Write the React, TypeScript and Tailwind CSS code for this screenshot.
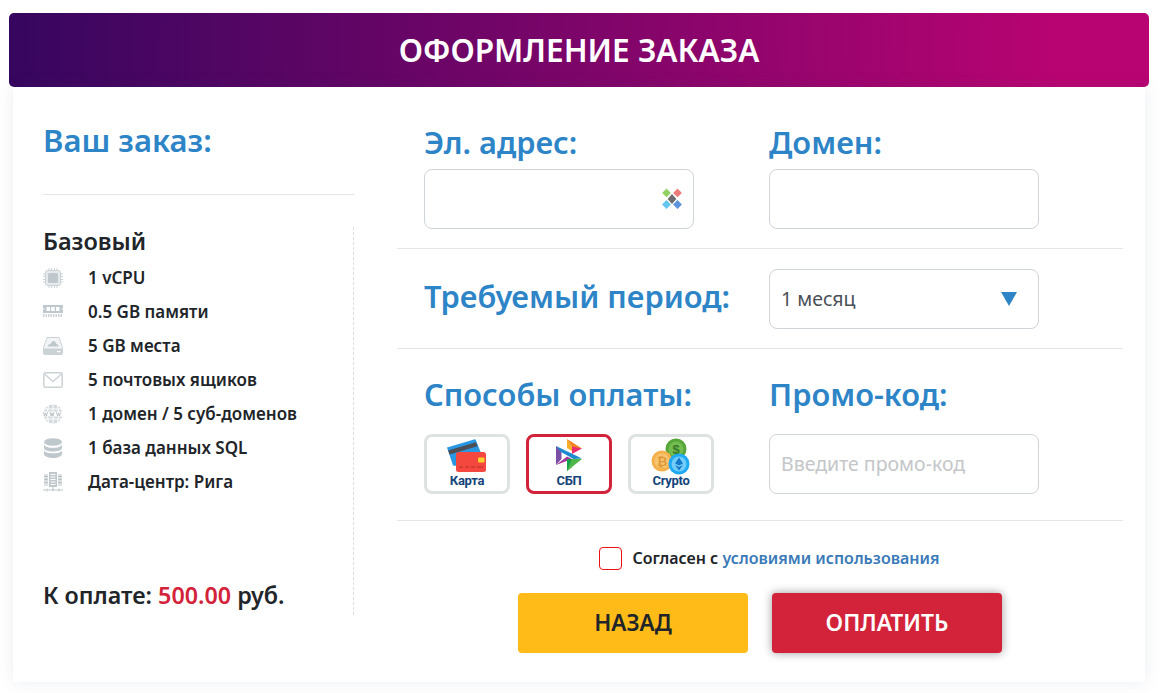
const specs = [
  { label: "1 vCPU", icon: <CpuIcon /> },
  { label: "0.5 GB памяти", icon: <RamIcon /> },
  { label: "5 GB места", icon: <DiskIcon /> },
  { label: "5 почтовых ящиков", icon: <MailIcon /> },
  { label: "1 домен / 5 суб-доменов", icon: <WebIcon /> },
  { label: "1 база данных SQL", icon: <DbIcon /> },
  { label: "Дата-центр: Рига", icon: <RackIcon /> },
];

function CpuIcon() {
  return (
    <svg width="20" height="20" viewBox="0 0 20 20" fill="none">
      <rect x="2.500" y="2.500" width="15" height="15" rx="2" fill="#e6eaec" stroke="#ccd3d7" />
      <rect x="5" y="5" width="10" height="10" rx="1.500" fill="#bfc8cd" />
      <path d="M6 0v2.500M8.500 0v2.500M11.500 0v2.500M14 0v2.500M6 17.500V20M8.500 17.500V20M11.500 17.500V20M14 17.500V20M0 6h2.500M0 8.500h2.500M0 11.500h2.500M0 14h2.500M17.500 6H20M17.500 8.500H20M17.500 11.500H20M17.500 14H20" stroke="#ccd3d7" />
    </svg>
  );
}

function RamIcon() {
  return (
    <svg width="20" height="20" viewBox="0 0 20 20" fill="none">
      <rect x="0" y="3" width="20" height="8" fill="#bfc8cd" />
      <path d="M3.500 5h3.500v4H3.500zM8.200 5h3.500v4H8.200zM13 5h3.500v4H13z" fill="#fff" />
      <path d="M0 13.500h20" stroke="#ccd3d7" strokeWidth="3" strokeDasharray="1.500 1" />
      <path d="M0 7h1.500M18.500 7H20" stroke="#fff" />
    </svg>
  );
}

function DiskIcon() {
  return (
    <svg width="20" height="20" viewBox="0 0 20 20" fill="none">
      <path d="M4 1.500h12l3.500 10v6a1 1 0 0 1-1 1h-17a1 1 0 0 1-1-1v-6z" fill="#f2f4f5" stroke="#ccd3d7" />
      <path d="M.5 12.500h19v5a1 1 0 0 1-1 1h-17a1 1 0 0 1-1-1z" fill="#ccd3d7" />
      <path d="M4.500 10.500c.500-2 2-2.500 3-2.500C8.500 6 9.500 5 10.500 5s2.500 1 3 3c1 0 2 1 2.500 2.500z" fill="#bfc8cd" />
      <rect x="14" y="15" width="3.500" height="1.200" fill="#fff" />
    </svg>
  );
}

function MailIcon() {
  return (
    <svg width="20" height="20" viewBox="0 0 20 20" fill="none">
      <rect x=".8" y="2.800" width="18.400" height="14.400" rx="1.500" stroke="#ccd3d7" strokeWidth="1.500" />
      <path d="M1.500 4 10 11.500 18.500 4" stroke="#ccd3d7" strokeWidth="1.500" />
    </svg>
  );
}

function WebIcon() {
  return (
    <svg width="20" height="20" viewBox="0 0 20 20" fill="none">
      <circle cx="10" cy="10" r="9.500" fill="#d3d9dc" />
      <path d="M1 5h18M1 15h18M10 .5v7M5.500 1.500 4.500 7.500M14.500 1.500l1 6M10 12.500v7M4.500 12.500l1 6M15.500 12.500l-1 6" stroke="#fff" strokeWidth="1" />
      <rect x="0" y="7.500" width="20" height="5" fill="#fff" />
      <path d="M.5 8l1 4 1-3 1 3 1-4M7 8l1 4 1-3 1 3 1-4M13.500 8l1 4 1-3 1 3 1-4" stroke="#aeb8bd" strokeWidth="0.800" />
    </svg>
  );
}

function DbIcon() {
  return (
    <svg width="20" height="20" viewBox="0 0 20 20" fill="#bfc8cd">
      <ellipse cx="10" cy="4" rx="9" ry="3.800" />
      <path d="M1 6.500c1 2.500 5 3.300 9 3.300s8-.8 9-3.300V10c0 2-4 3.500-9 3.500S1 12 1 10z" />
      <path d="M1 12.500c1 2 5 2.800 9 2.800s8-.8 9-2.800V16c0 2.200-4 4-9 4s-9-1.800-9-4z" />
    </svg>
  );
}

function RackIcon() {
  return (
    <svg width="20" height="20" viewBox="0 0 20 20" fill="none">
      <rect x="6" y="0" width="8" height="15" fill="#bfc8cd" />
      <path d="M7.500 2.500h5M7.500 5h5M7.500 7.500h5M7.500 10h5M7.500 12.500h5" stroke="#fff" />
      <path d="M1 2h4v12H1zM15 2h4v12h-4z" fill="#dde1e4" />
      <path d="M1.500 4.500h3M1.500 7.500h3M1.500 10.500h3M15.500 4.500h3M15.500 7.500h3M15.500 10.500h3" stroke="#aeb8bd" />
      <path d="M0 18h20M10 15v3M4 16.500v3M10 16.500v3M16 16.500v3" stroke="#bfc8cd" />
    </svg>
  );
}

function CardsIcon() {
  return (
    <svg width="42" height="34" viewBox="0 0 42 34">
      <path d="M1 8.500 28 .5a1.500 1.500 0 0 1 2 1L35 14 12 27l-5-.5z" fill="#2a97e3" />
      <path d="M2.200 11.500 30 3.200l1.500 4L3.500 15.500z" fill="#4c4f54" />
      <rect x="10" y="13" width="30" height="20" rx="2.500" fill="#f4483f" />
      <rect x="32" y="18.500" width="6.500" height="5" rx="1.200" fill="#fbd02d" />
      <path d="M13 28h4M19 28h4M25 28h4M31 28h6" stroke="#b62e28" strokeWidth="1.200" />
    </svg>
  );
}

function SbpIcon() {
  return (
    <svg width="26" height="32" viewBox="0 0 26 32">
      <path d="M11 0v9l5 3V8z" fill="#f7b023" />
      <path d="M11 0 26 9.500l-10 .2V8z" fill="#f58220" />
      <path d="M16 7.500 26 9.500 16 15z" fill="#e92d6f" />
      <path d="M0 7v19l5.500-6v-9z" fill="#7a4fa6" />
      <path d="M0 7 26 19.500l-8.500.5L5 13z" fill="#1d8ad0" />
      <path d="M0 26 11 17.500l5 2.500z" fill="#a43a9b" />
      <path d="M11 20v12l5-4v-8z" fill="#18a04a" />
      <path d="M16 20h10L11 32z" fill="#4fb848" />
    </svg>
  );
}

function CryptoIcon() {
  return (
    <svg width="40" height="38" viewBox="0 0 40 38" className="-ml-[2px] -mt-[1px]">
      <circle cx="26" cy="11" r="10.500" fill="#57a53a" />
      <circle cx="26" cy="11" r="7.500" fill="#73bd50" />
      <text x="26" y="15.500" textAnchor="middle" fontSize="13" fontWeight="700" fill="#38782a" fontFamily="Liberation Sans, sans-serif">$</text>
      <circle cx="12" cy="23" r="10.500" fill="#f3b04b" />
      <circle cx="12" cy="23" r="7.500" fill="#f7c572" />
      <text x="12" y="27.500" textAnchor="middle" fontSize="13" fontWeight="700" fill="#df9a35" fontFamily="DejaVu Sans, sans-serif">₿</text>
      <circle cx="29" cy="26" r="10.500" fill="#1eaaf3" />
      <circle cx="29" cy="26" r="7.500" fill="#74cdf8" />
      <path d="M29 19.500l-4 6 4 2 4-2zM25 27l4 5.500 4-5.500-4 2z" fill="#1479c9" />
    </svg>
  );
}

function ExtensionIcon() {
  return (
    <svg width="22" height="22" viewBox="1 1 20 20" className="shrink-0">
      <path d="M6 1.500l4 4-4 4-4-4z" fill="#92d166" />
      <path d="M16 1.500l4 4-4 4-4-4z" fill="#ec7c78" />
      <path d="M11 6.500l4 4.500-4 4.500-4-4.500z" fill="#6d6d6d" />
      <path d="M6 12l4 4-4 4-4-4z" fill="#63c7f0" />
      <path d="M16 12l4 4-4 4-4-4z" fill="#5d92dc" />
    </svg>
  );
}

function Label({ children, className }: { children: React.ReactNode; className?: string }) {
  return <div className={"text-[30.800px] leading-[36px] font-semibold text-[#2d85c7] " + (className ?? "")}>{children}</div>;
}

export default function App() {
  const payments = [
    { name: "Карта", icon: <CardsIcon />, active: false },
    { name: "СБП", icon: <SbpIcon />, active: true },
    { name: "Crypto", icon: <CryptoIcon />, active: false },
  ];

  return (
    <div className="h-[693px] bg-white pt-[13px] pl-[9px] pr-[22px] overflow-hidden font-['Noto_Sans','Open_Sans',sans-serif] text-[#212529]">
      <div className="h-[74px] flex items-center justify-center rounded-[5px] bg-[linear-gradient(92deg,#36065f,#b80472_92%)] text-[31.500px] font-semibold text-white">
        ОФОРМЛЕНИЕ ЗАКАЗА
      </div>

      <div className="mx-[4px] h-[595px] bg-white shadow-[0_0_16px_rgba(60,80,110,0.1)] flex">
        {/* левая колонка */}
        <div className="w-[341px] pl-[30px] shrink-0">
          <Label className="pt-[35px] text-[31px]">Ваш заказ:</Label>
          <div className="mt-[36px] border-t border-[#e3e5e7]" />
          <div className="mt-[32px] h-[388px] border-r border-dashed border-[#dcdfe2] flex flex-col">
            <div className="text-[23.500px] leading-[28px] font-semibold">Базовый</div>
            <ul className="mt-[6px]">
              {specs.map((s) => (
                <li key={s.label} className="h-[34px] flex items-center text-[17px] font-semibold">
                  <span className="w-[45px] shrink-0">{s.icon}</span>
                  {s.label}
                </li>
              ))}
            </ul>
            <div className="mt-auto pb-[5px] text-[23.300px] leading-[30px] font-semibold">
              К оплате: <span className="text-[#d3233a]">500.00</span> руб.
            </div>
          </div>
        </div>

        {/* правая колонка */}
        <div className="ml-[43px] w-[726px]">
          <div className="h-[162px] border-b border-[#e3e5e7] pl-[27px] flex gap-[75px] pt-[37px]">
            <div>
              <Label>Эл. адрес:</Label>
              <div className="mt-[9px] w-[270px] h-[60px] rounded-[8px] border border-[#ced4da] flex items-center justify-end pr-[10px]">
                <ExtensionIcon />
              </div>
            </div>
            <div>
              <Label>Домен:</Label>
              <div className="mt-[9px] w-[270px] h-[60px] rounded-[8px] border border-[#ced4da]" />
            </div>
          </div>

          <div className="h-[100px] border-b border-[#e3e5e7] pl-[27px] flex items-center">
            <Label className="w-[345px] mb-[5px]">Требуемый период:</Label>
            <div className="w-[270px] h-[60px] rounded-[8px] border border-[#ced4da] flex items-center justify-between pl-[11px] pr-[21px] text-[19.500px] text-[#495057]">
              1 месяц
              <svg width="16" height="14" viewBox="0 0 16 14"><path d="M0 0h16L8 14z" fill="#2d85c7" /></svg>
            </div>
          </div>

          <div className="h-[172px] border-b border-[#e3e5e7] pl-[27px] flex gap-[75px] pt-[27px]">
            <div>
              <Label>Способы оплаты:</Label>
              <div className="mt-[22px] w-[270px] flex gap-[16px]">
                {payments.map((p) => (
                  <div
                    key={p.name}
                    className={
                      "w-[86px] h-[60px] shrink-0 rounded-[8px] border-[3px] flex flex-col items-center pt-[2px] " +
                      (p.active ? "border-[#d3233a]" : "border-[#dfe2e3]")
                    }
                  >
                    <div className="h-[34px] w-full flex items-start justify-center">{p.icon}</div>
                    <div className="relative text-[13px] leading-[15px] font-bold tracking-[-0.3px] text-[#14457a] font-['Roboto',sans-serif]">{p.name}</div>
                  </div>
                ))}
              </div>
            </div>
            <div>
              <Label>Промо-код:</Label>
              <div className="mt-[22px] w-[270px] h-[60px] rounded-[8px] border border-[#ced4da] flex items-center pl-[11px] text-[19.500px] text-[#c4c6c9]">
                Введите промо-код
              </div>
            </div>
          </div>

          <div className="pt-[25px]">
            <div className="flex items-center justify-center gap-[10px] pl-[19px] text-[16px] font-semibold h-[24px]">
              <span className="w-[23px] h-[23px] rounded-[4px] border border-[#ee1111]" />
              <span>
                Согласен с <span className="text-[#3a7ab8]">условиями использования</span>
              </span>
            </div>
            <div className="mt-[23px] flex justify-center gap-[24px]">
              <button className="w-[230px] h-[60px] rounded-[4px] bg-[#ffbb17] text-[22.500px] font-semibold">НАЗАД</button>
              <button className="w-[230px] h-[60px] rounded-[4px] bg-[#d3233a] text-[22.800px] font-semibold text-white shadow-[0_0_10px_rgba(0,0,0,0.4)]">ОПЛАТИТЬ</button>
            </div>
          </div>
        </div>
      </div>
    </div>
  );
}
